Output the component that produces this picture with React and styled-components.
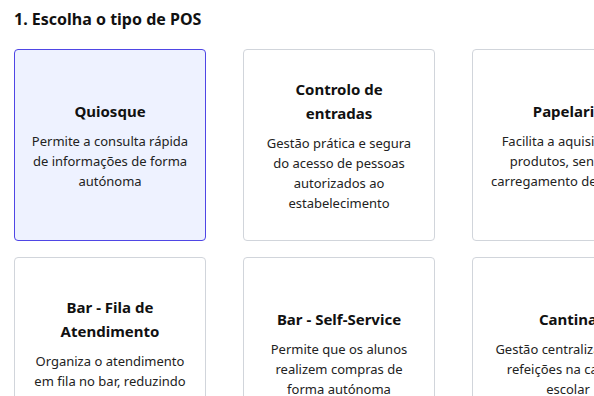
import React from "react";
import styled, { createGlobalStyle } from "styled-components";

const Global = createGlobalStyle`
  html, body { margin: 0; padding: 0; background: #ffffff; }
  body { font-family: "Noto Sans", "Open Sans", sans-serif; color: #111111; overflow: hidden; }
`;

const Page = styled.div`
  width: 594px;
  height: 396px;
  overflow: hidden;
  padding: 7px 0 0 14px;
  box-sizing: border-box;
`;

const Heading = styled.h2`
  margin: 0 0 18px;
  font-size: 16px;
  line-height: 24px;
  font-weight: 700;
  color: #111111;
`;

const Grid = styled.div`
  display: grid;
  grid-template-columns: repeat(3, 192px);
  column-gap: 37px;
  row-gap: 16px;
  width: max-content;
`;

const Card = styled.button`
  box-sizing: border-box;
  height: 192px;
  padding: 0 16px;
  display: flex;
  flex-direction: column;
  justify-content: center;
  align-items: center;
  text-align: center;
  border-radius: 4px;
  border: 1px solid ${(p) => (p.$selected ? "#4f46e5" : "#d1d5db")};
  background: ${(p) => (p.$selected ? "#eef2ff" : "#ffffff")};
  font-family: inherit;
  cursor: pointer;
`;

const Title = styled.div`
  padding: 0 8px;
  font-size: 15px;
  line-height: 24px;
  font-weight: 700;
  color: #111111;
  margin-bottom: 8px;
`;

const Desc = styled.div`
  font-size: 13px;
  line-height: 20px;
  color: #222222;
`;

const items = [
  { t: "Quiosque", d: "Permite a consulta rápida de informações de forma autónoma", sel: true },
  { t: "Controlo de entradas", d: "Gestão prática e segura do acesso de pessoas autorizados ao estabelecimento" },
  { t: "Papelaria", d: "Facilita a aquisição de produtos, senhas e carregamento de cartões" },
  { t: "Bar - Fila de Atendimento", d: "Organiza o atendimento em fila no bar, reduzindo esperas" },
  { t: "Bar - Self-Service", d: "Permite que os alunos realizem compras de forma autónoma" },
  { t: "Cantina", d: "Gestão centralizada das refeições na cantina escolar" },
];

export default function App() {
  return (
    <Page>
      <Global />
      <Heading>1. Escolha o tipo de POS</Heading>
      <Grid>
        {items.map((it) => (
          <Card key={it.t} $selected={it.sel}>
            <Title>{it.t}</Title>
            <Desc>{it.d}</Desc>
          </Card>
        ))}
      </Grid>
    </Page>
  );
}
